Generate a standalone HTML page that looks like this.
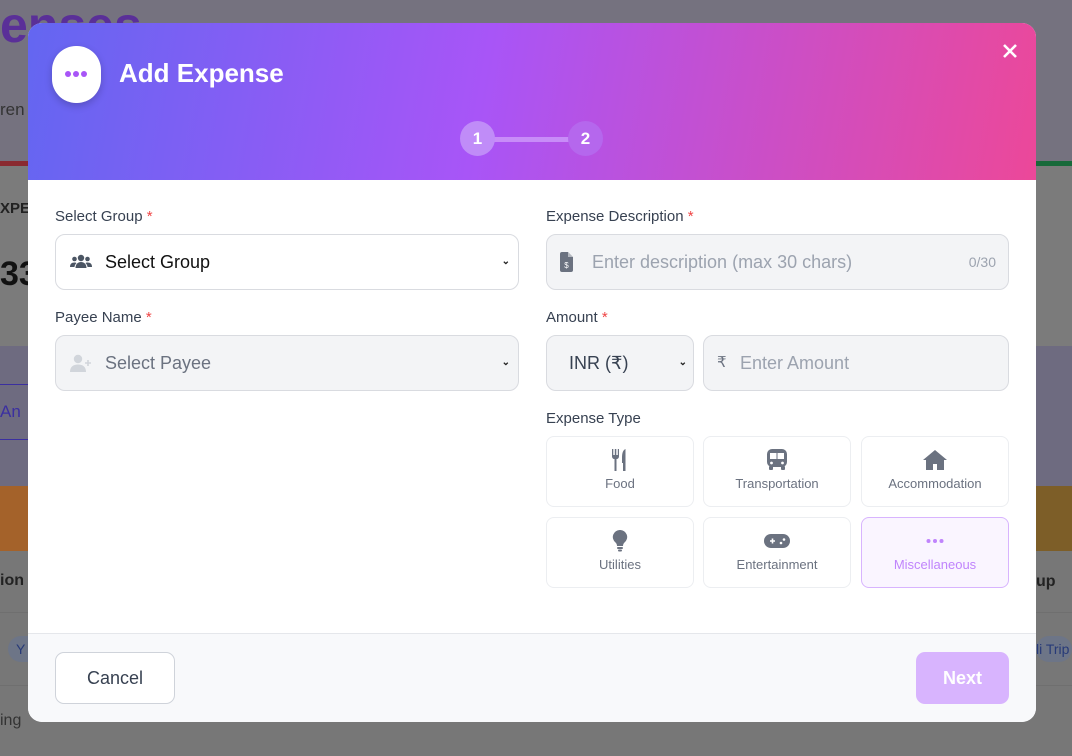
<!DOCTYPE html>
<html><head><meta charset="utf-8"><style>
*{box-sizing:border-box;margin:0;padding:0}
body{width:1072px;height:756px;overflow:hidden;font-family:"Liberation Sans",sans-serif;background:#75727f;position:relative}
.bg{position:absolute;left:0;width:1072px}
.m{position:absolute;left:28px;top:23px;width:1008px;height:699px;background:#fff;border-radius:14px;overflow:hidden}
.hd{height:157px;background:linear-gradient(100deg,#6366f1 0%,#a855f7 45%,#ec4899 100%);position:relative}
.ic{position:absolute;left:24px;top:23px;width:49px;height:57px;background:#fff;border-radius:24px;box-shadow:0 3px 8px rgba(0,0,0,.2)}
.ic i{position:absolute;top:25px;width:6px;height:6px;border-radius:3px;background:#a855f7}
.tt{position:absolute;left:91px;top:35px;color:#fff;font-weight:bold;font-size:26px}
.x{position:absolute;right:18px;top:19px;color:#fff;font-size:20px}
.st{position:absolute;top:98px;width:35px;height:35px;border-radius:50%;color:#fff;font-weight:bold;font-size:17px;text-align:center;line-height:35px}
.ln{position:absolute;left:466px;top:114px;width:76px;height:5px;background:#c88cf8}
.lb{position:absolute;font-size:15px;color:#374151}
.lb b{color:#ef4444;font-weight:normal}
.in{position:absolute;height:56px;border:1px solid #d9dbe0;border-radius:10px;background:#f3f4f6;font-size:18px;color:#9ca3af;line-height:54px}
.car{position:absolute;right:8px;top:0;font-size:10px;color:#222;font-weight:bold}
.tp{position:absolute;width:148px;height:71px;border:1px solid #eceef1;border-radius:8px;text-align:center;font-size:13px;color:#6b7280}
.tp .g{display:block;height:22px;margin-top:12px;margin-bottom:5px}
.ft{position:absolute;left:0;top:610px;width:1008px;height:89px;background:#f8f9fb;border-top:1px solid #e5e7eb}
</style></head><body>
<div class="bg" style="top:0;height:160px;background:#75727f"></div>
<div class="bg" style="top:0;left:0;width:200px;height:60px;color:#5a2f98;font-size:50px;font-weight:bold;line-height:50px">enses</div>
<div class="bg" style="top:100px;left:0;width:30px;color:#333;font-size:17px">ren</div>
<div class="bg" style="top:161px;height:5px;background:#8a2a30"></div>
<div class="bg" style="top:161px;left:1036px;width:36px;height:5px;background:#186a3a"></div>
<div class="bg" style="top:166px;height:180px;background:#7b7b7b"></div>
<div class="bg" style="top:200px;left:0;width:30px;font-size:15px;font-weight:bold;color:#222">XPE</div>
<div class="bg" style="top:255px;left:0;width:30px;font-size:34px;font-weight:bold;color:#111">33</div>
<div class="bg" style="top:346px;height:140px;background:#6e6b80"></div>
<div class="bg" style="top:384px;left:0;width:30px;height:56px;border-top:1px solid #3b2fa0;border-bottom:1px solid #3b2fa0;color:#3b2fa0;font-size:17px;padding-top:17px">An</div>
<div class="bg" style="top:486px;height:65px;background:#a4622a"></div>
<div class="bg" style="top:486px;left:1036px;width:36px;height:65px;background:#7d5e28"></div>
<div class="bg" style="top:551px;height:205px;background:#777"></div>
<div class="bg" style="top:612px;border-top:1px solid #6f6f6f;height:1px"></div>
<div class="bg" style="top:685px;border-top:1px solid #6f6f6f;height:1px"></div>
<div class="bg" style="top:573px;left:1036px;width:36px;font-size:16px;font-weight:bold;color:#222">up</div>
<div class="bg" style="top:636px;left:1036px;width:36px;height:26px;background:#6d7587;border-radius:13px;color:#273a78;font-size:14px;line-height:26px">li Trip</div>
<div class="bg" style="top:572px;left:0;width:28px;font-size:16px;font-weight:bold;color:#222">ion</div>
<div class="bg" style="top:636px;left:8px;width:20px;height:26px;background:#6d7587;border-radius:13px 0 0 13px;color:#273a78;font-size:14px;line-height:26px;padding-left:8px">Y</div>
<div class="bg" style="top:712px;left:0;width:30px;font-size:16px;color:#333">ing</div>
<div class="m">
 <div class="hd">
  <div class="ic"><i style="left:13px"></i><i style="left:21px"></i><i style="left:29px"></i></div>
  <div class="tt">Add Expense</div>
  <div class="x"><svg width="16" height="16" viewBox="0 0 16 16"><path d="M2 2L14 14M14 2L2 14" stroke="#fff" stroke-width="2.6"/></svg></div>
  <div class="ln"></div>
  <div class="st" style="left:432px;background:#c08cf8">1</div>
  <div class="st" style="left:540px;background:#b567ed">2</div>
 </div>
 <div class="lb" style="left:27px;top:185px">Select Group <b>*</b></div>
 <div class="in" style="left:27px;top:211px;width:464px;background:#fff;color:#111;padding-left:49px">Select Group<span class="car">&#8964;</span>
  <svg style="position:absolute;left:14px;top:18px" width="22" height="18" viewBox="0 0 22 18"><circle cx="11" cy="5" r="3.2" fill="#4b5563"/><circle cx="4.5" cy="6" r="2.3" fill="#4b5563"/><circle cx="17.5" cy="6" r="2.3" fill="#4b5563"/><path d="M5.5 15c0-4 2.5-6 5.5-6s5.5 2 5.5 6z" fill="#4b5563"/><path d="M0 14c0-3 1.5-4.5 4.5-4.5 1 0 1.5.3 2 .6C5 11.5 4.5 13 4.5 14z M22 14c0-3-1.5-4.5-4.5-4.5-1 0-1.5.3-2 .6 1.5 1.4 2 2.9 2 3.9z" fill="#4b5563"/></svg></div>
 <div class="lb" style="left:27px;top:286px">Payee Name <b>*</b></div>
 <div class="in" style="left:27px;top:312px;width:464px;color:#6b7280;padding-left:49px">Select Payee<span class="car">&#8964;</span>
  <svg style="position:absolute;left:14px;top:18px" width="24" height="18" viewBox="0 0 24 18"><circle cx="8" cy="5" r="4.2" fill="#d1d5db"/><path d="M0 18c0-5 3-7.5 8-7.5s8 2.5 8 7.5z" fill="#d1d5db"/><path d="M18 6v6M15 9h6" stroke="#d1d5db" stroke-width="1.6"/></svg></div>
 <div class="lb" style="left:518px;top:185px">Expense Description <b>*</b></div>
 <div class="in" style="left:518px;top:211px;width:463px;padding-left:45px">Enter description (max 30 chars)<span style="position:absolute;right:12px;font-size:14px;color:#9ca3af">0/30</span>
  <svg style="position:absolute;left:13px;top:17px" width="13" height="20" viewBox="0 0 13 20"><path d="M0 2a2 2 0 0 1 2-2h6l5 5v13a2 2 0 0 1-2 2H2a2 2 0 0 1-2-2z" fill="#6b7280"/><path d="M8 0v5h5" fill="#fff" opacity=".5"/><text x="6.5" y="16" font-size="8" fill="#fff" text-anchor="middle" font-family="Liberation Sans">$</text></svg></div>
 <div class="lb" style="left:518px;top:286px">Amount <b>*</b></div>
 <div class="in" style="left:518px;top:312px;width:148px;color:#374151;padding-left:22px">INR (₹)<span class="car" style="right:6px">&#8964;</span></div>
 <div class="in" style="left:675px;top:312px;width:306px;padding-left:36px"><span style="position:absolute;left:13px;font-size:15px;color:#6b7280">₹</span>Enter Amount</div>
 <div class="lb" style="left:518px;top:387px">Expense Type</div>
 <div class="tp" style="left:518px;top:413px"><span class="g"><svg width="18" height="22" viewBox="0 0 18 22"><path d="M1 0v7c0 2 1 3 2.5 3v12h2V10C7 10 8 9 8 7V0H6.8v6H5.3V0H3.8v6H2.3V0z M12 22h2.5V0C12 1 11 4 11 9v5h1z" fill="#6b7280"/></svg></span>Food</div>
 <div class="tp" style="left:675px;top:413px"><span class="g"><svg width="22" height="22" viewBox="0 0 22 22"><rect x="1" y="0" width="20" height="18" rx="5" fill="#6b7280"/><rect x="4" y="4" width="6.5" height="6" fill="#fff"/><rect x="11.5" y="4" width="6.5" height="6" fill="#fff"/><circle cx="5.5" cy="14" r="1.4" fill="#fff"/><circle cx="16.5" cy="14" r="1.4" fill="#fff"/><rect x="3" y="17" width="4" height="4" rx="1" fill="#6b7280"/><rect x="15" y="17" width="4" height="4" rx="1" fill="#6b7280"/></svg></span>Transportation</div>
 <div class="tp" style="left:833px;top:413px"><span class="g"><svg width="24" height="22" viewBox="0 0 24 22"><path d="M12 1L0 11h3v10h7v-6h4v6h7V11h3z" fill="#6b7280"/></svg></span>Accommodation</div>
 <div class="tp" style="left:518px;top:494px"><span class="g"><svg width="16" height="22" viewBox="0 0 16 22"><path d="M8 0a7 7 0 0 0-4.5 12.5c1 1 1.5 2 1.5 3.5h6c0-1.5.5-2.5 1.5-3.5A7 7 0 0 0 8 0z" fill="#6b7280"/><rect x="5" y="17" width="6" height="2" rx="1" fill="#6b7280"/><rect x="6" y="19.5" width="4" height="2" rx="1" fill="#6b7280"/></svg></span>Utilities</div>
 <div class="tp" style="left:675px;top:494px"><span class="g"><svg width="26" height="22" viewBox="0 0 26 22"><rect x="0" y="4" width="26" height="14" rx="7" fill="#6b7280"/><path d="M6 11h5M8.5 8.5v5" stroke="#fff" stroke-width="1.6"/><circle cx="17" cy="13" r="1.3" fill="#fff"/><circle cx="20" cy="9.5" r="1.3" fill="#fff"/></svg></span>Entertainment</div>
 <div class="tp" style="left:833px;top:494px;border-color:#d8b4fe;background:#faf5ff;color:#c084fc"><span class="g"><svg width="20" height="22" viewBox="0 0 20 22"><circle cx="3.5" cy="11" r="2" fill="#c084fc"/><circle cx="10" cy="11" r="2" fill="#c084fc"/><circle cx="16.5" cy="11" r="2" fill="#c084fc"/></svg></span>Miscellaneous</div>
 <div class="ft">
  <div style="position:absolute;left:27px;top:18px;width:120px;height:52px;border:1px solid #cfd3da;border-radius:9px;background:#fff;text-align:center;line-height:50px;font-size:18px;color:#374151">Cancel</div>
  <div style="position:absolute;left:888px;top:18px;width:93px;height:52px;border-radius:9px;background:#d8b4fe;text-align:center;line-height:52px;font-size:18px;font-weight:bold;color:#fff">Next</div>
 </div>
</div>
</body></html>
